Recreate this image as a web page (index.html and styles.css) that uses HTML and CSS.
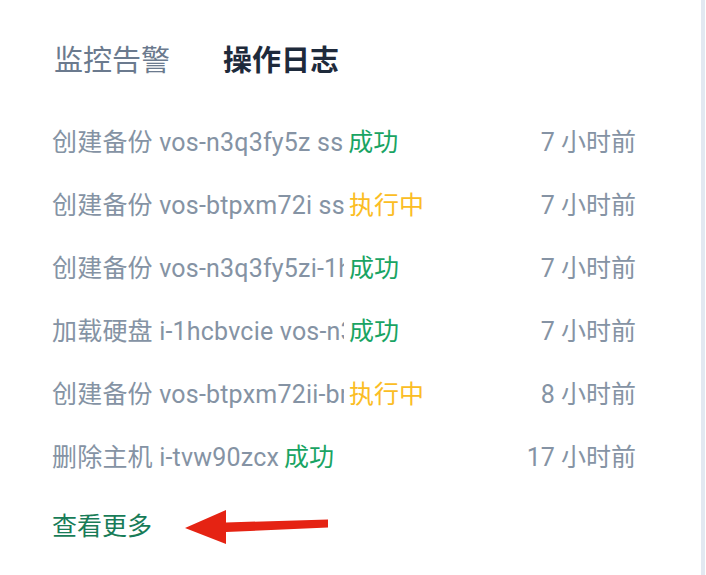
FILE: index.html
```html
<!DOCTYPE html>
<html lang="zh-CN">
<head>
<meta charset="utf-8">
<title>操作日志</title>
<link rel="stylesheet" href="styles.css">
</head>
<body>
<div class="page">
  <div class="content">
    <div class="tabs">
      <span class="tab">监控告警</span>
      <span class="tab active">操作日志</span>
    </div>
    <ul class="log-list">
      <li class="log-row">
        <div class="log-main"><span class="desc">创建备份 vos-n3q3fy5z ss</span><span class="status ok">成功</span></div>
        <span class="time">7 小时前</span>
      </li>
      <li class="log-row">
        <div class="log-main"><span class="desc">创建备份 vos-btpxm72i ss</span><span class="status running">执行中</span></div>
        <span class="time">7 小时前</span>
      </li>
      <li class="log-row">
        <div class="log-main"><span class="desc">创建备份 vos-n3q3fy5zi-1hcbvcie</span><span class="status ok">成功</span></div>
        <span class="time">7 小时前</span>
      </li>
      <li class="log-row">
        <div class="log-main"><span class="desc">加载硬盘 i-1hcbvcie vos-n3q3fy5zi</span><span class="status ok">成功</span></div>
        <span class="time">7 小时前</span>
      </li>
      <li class="log-row">
        <div class="log-main"><span class="desc">创建备份 vos-btpxm72ii-bnrqx</span><span class="status running">执行中</span></div>
        <span class="time">8 小时前</span>
      </li>
      <li class="log-row">
        <div class="log-main"><span class="desc">删除主机 i-tvw90zcx</span><span class="status ok">成功</span></div>
        <span class="time">17 小时前</span>
      </li>
    </ul>
    <div class="more-row">
      <a class="more" href="#">查看更多</a>
    </div>
    <svg class="arrow" width="706" height="575" viewBox="0 0 706 575" aria-hidden="true">
      <polygon points="185,528 226,510 226,522.5 328,519.5 328,527.5 226,532 226,544" fill="#e52313"/>
    </svg>
  </div>
  <div class="rail"></div>
</div>
</body>
</html>
```
FILE: styles.css
```css
html, body {
  margin: 0;
  padding: 0;
  background: #ffffff;
}

body {
  font-family: Roboto, "Noto Sans CJK SC", "Noto Sans", sans-serif;
}

.page {
  display: flex;
  width: 706px;
  height: 575px;
  overflow: hidden;
}

.content {
  position: relative;
  flex: 1;
  padding: 41px 0 0 52px;
}

.rail {
  width: 4px;
  margin-right: 1px;
  background: #e2e8f1;
}

.tabs {
  display: flex;
  gap: 53px;
  padding-left: 2px;
  height: 40px;
  line-height: 40px;
  font-size: 29px;
}

.tab {
  color: #6b7a8e;
}

.tab.active {
  color: #1e2a3b;
  font-weight: 700;
}

.log-list {
  list-style: none;
  margin: 30px 0 0;
  padding: 0;
  width: 584px;
}

.log-row {
  display: flex;
  align-items: center;
  justify-content: space-between;
  height: 63px;
  line-height: 63px;
  font-size: 25px;
}

.log-main {
  display: flex;
  align-items: center;
  min-width: 0;
}

.desc {
  color: #8593a4;
  max-width: 292px;
  overflow: hidden;
  white-space: nowrap;
  letter-spacing: 0.2px;
}

.status {
  margin-left: 5px;
  white-space: nowrap;
}

.status.ok {
  color: #19a463;
}

.status.running {
  color: #fbbd24;
}

.time {
  color: #8593a4;
  white-space: nowrap;
}

.more-row {
  margin-top: 18px;
  height: 40px;
  line-height: 40px;
}

.more {
  font-size: 25px;
  color: #187c58;
  text-decoration: none;
}

.arrow {
  position: absolute;
  left: 0;
  top: 0;
  pointer-events: none;
}
```
